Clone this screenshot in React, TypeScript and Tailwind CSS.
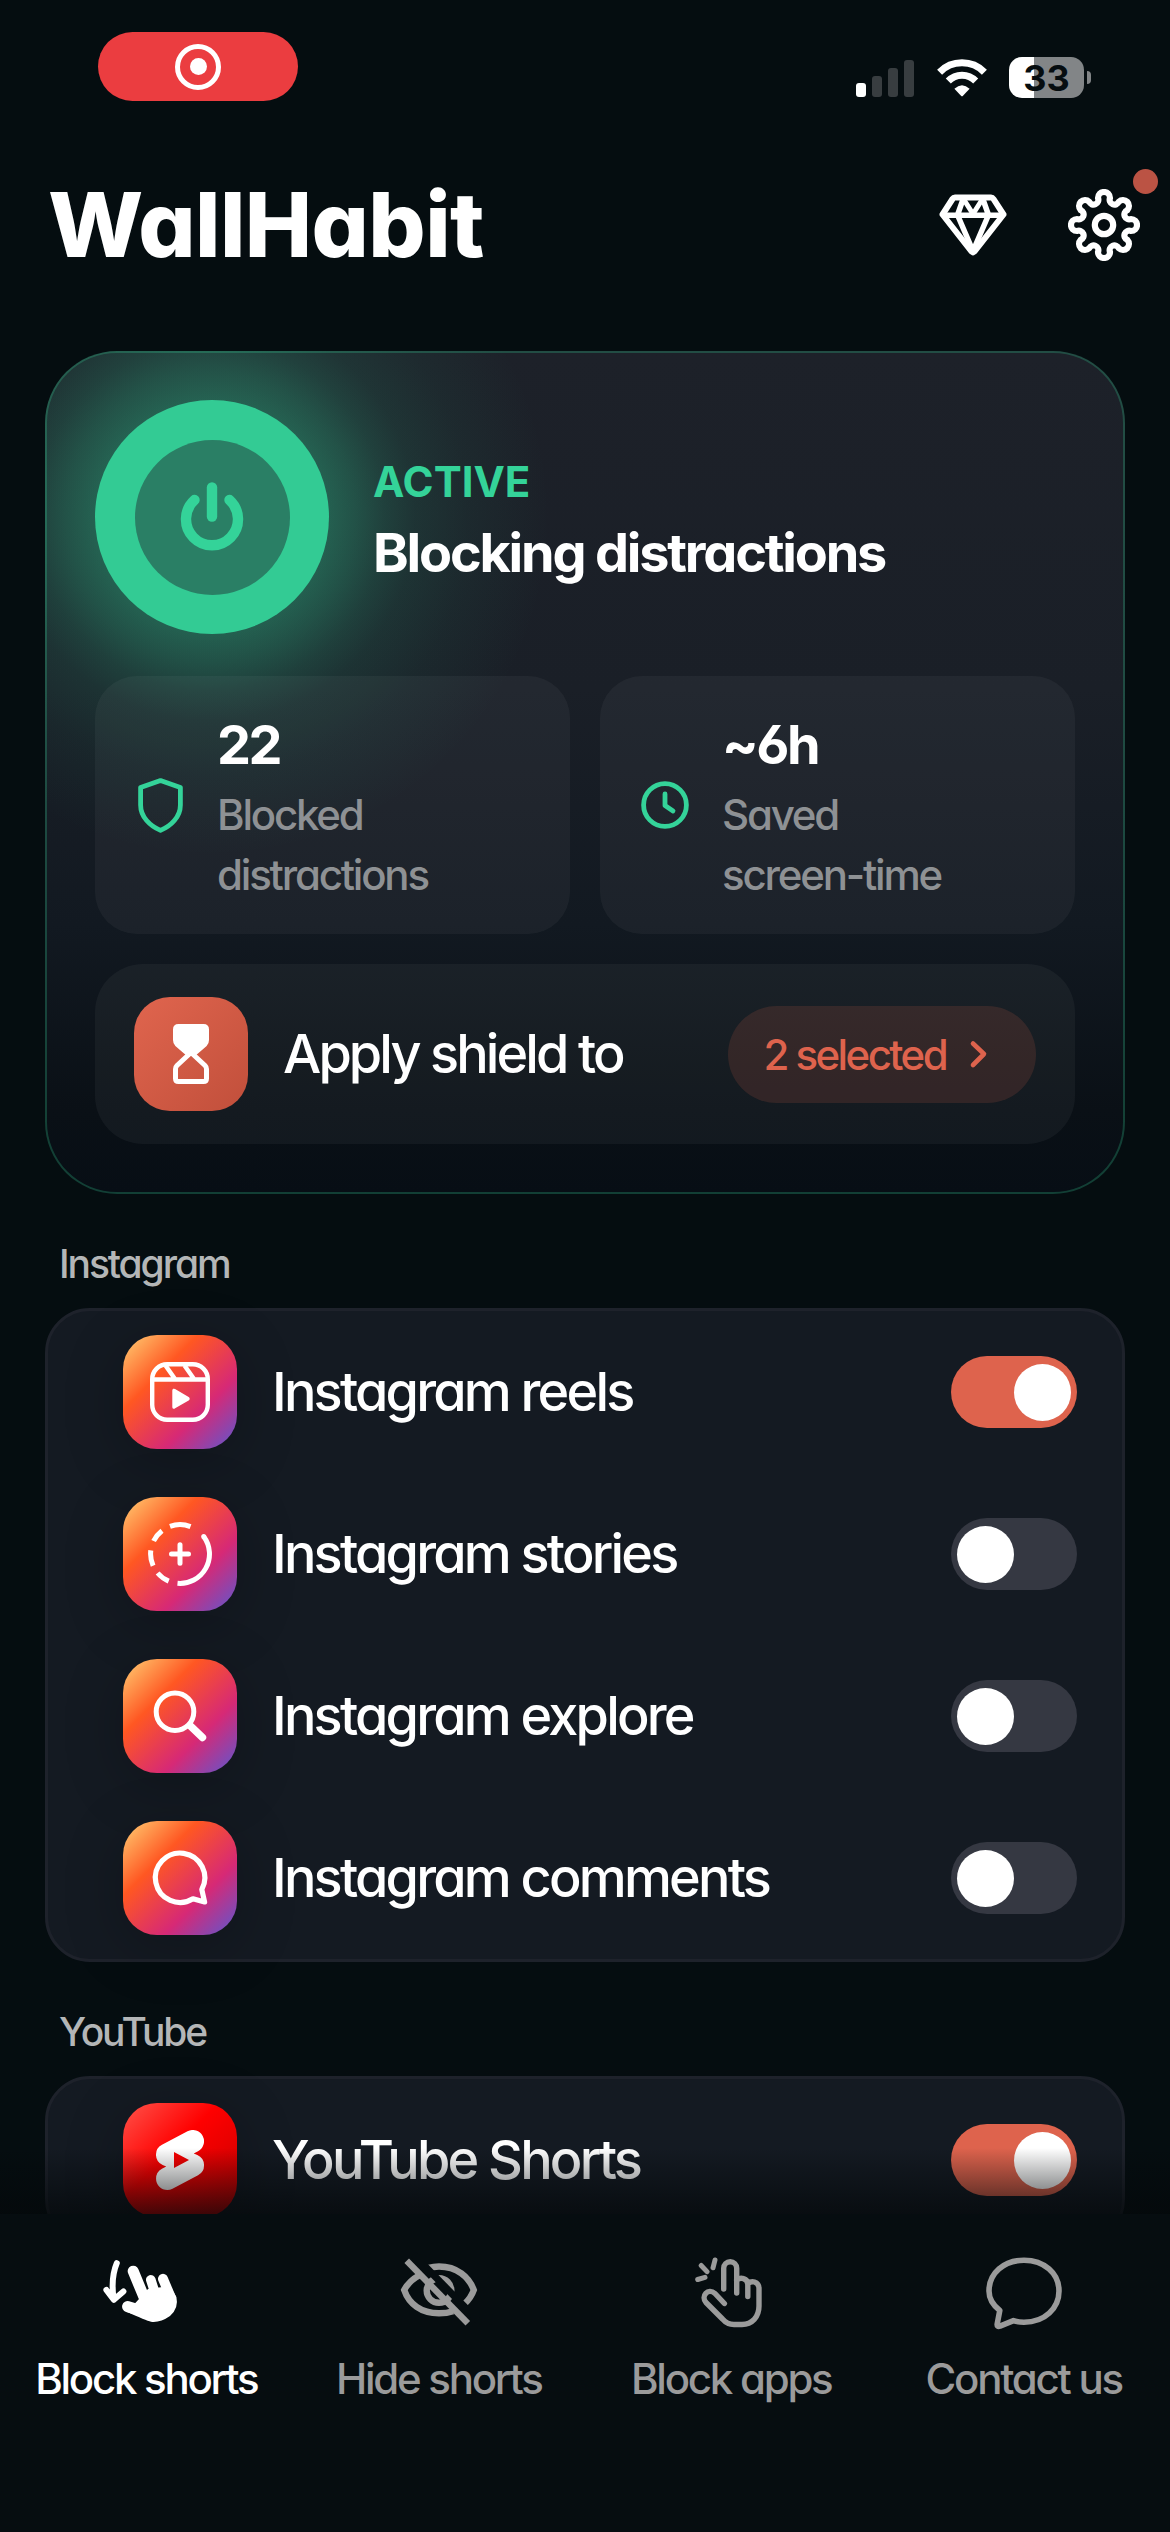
import React, { useState } from 'react';
import { SiYoutubeshorts } from 'react-icons/si';

function StatusBar() {
  return (
    <div className="flex h-[133px] shrink-0 items-center justify-between pl-[98px] pr-[79px]">
      <div className="flex h-[69px] w-[200px] items-center justify-center rounded-full bg-[#eb3d40]">
        <div className="flex h-[46px] w-[46px] items-center justify-center rounded-full border-[5px] border-white">
          <div className="h-[17px] w-[17px] rounded-full bg-white" />
        </div>
      </div>
      <div className="flex items-center pt-[22px]">
        <div className="flex h-[38px] items-end gap-[6px]">
          <div className="h-[14px] w-[10px] rounded-[3px] bg-white" />
          <div className="h-[21px] w-[10px] rounded-[3px] bg-[#383d40]" />
          <div className="h-[29px] w-[10px] rounded-[3px] bg-[#383d40]" />
          <div className="h-[37px] w-[10px] rounded-[3px] bg-[#383d40]" />
        </div>
        <svg className="ml-[23px] h-[38px] w-[50px]" viewBox="0 0 50 38" fill="none">
          <path d="M2.6 13.2A31.5 31.5 0 0 1 47.4 13.2" stroke="white" strokeWidth="7" />
          <path d="M11.3 22A19 19 0 0 1 38.7 22" stroke="white" strokeWidth="7" />
          <path d="M17.4 29.8Q25 22.6 32.6 29.8L26 36.8Q25 37.8 24 36.8Z" fill="white" />
        </svg>
        <div className="ml-[22px] flex h-[41px] w-[75px] items-center justify-center rounded-[13px] bg-[linear-gradient(90deg,#ffffff_33.3%,#828587_33.3%)] text-[36px] font-bold leading-none text-[#060d10]">
          33
        </div>
        <div className="ml-[3px] h-[13px] w-[4px] rounded-r-full bg-[#828587]" />
      </div>
    </div>
  );
}

function GemIcon() {
  return (
    <svg className="h-[62px] w-[68px]" viewBox="0 0 67 62" fill="none" stroke="white" strokeWidth="6" strokeLinejoin="round">
      <path d="M15.5 3.4H51.5Q53 3.4 54 5L64 20.5L35 57.5Q33.5 59 32 57.5L3 20.5L13 5Q14 3.4 15.5 3.4Z" />
      <path d="M4 21.3H63M24 4L18 21L33.5 57L49 21L43 4" strokeWidth="5.5" />
      <path d="M24 5L33.5 20L43 5" strokeWidth="5" />
    </svg>
  );
}

// eight round teeth joined by concave arcs
const gearPath =
  Array.from({ length: 8 }, (_, i) => {
    const a = (i * Math.PI) / 4;
    const at = (x: number, y: number) =>
      `${(36 + x * Math.cos(a) + y * Math.sin(a)).toFixed(2)} ${(36 + x * Math.sin(a) - y * Math.cos(a)).toFixed(2)}`;
    return `${i === 0 ? 'M' : 'A4.6 4.6 0 0 0 '}${at(-6, 27)}A6 6 0 0 1 ${at(6, 27)}`;
  }).join('') + 'A4.6 4.6 0 0 0 30 9Z';

function GearIcon() {
  return (
    <svg className="h-[72px] w-[72px]" viewBox="0 0 72 72" fill="none" stroke="white" strokeWidth="6.2" strokeLinejoin="round">
      <path d={gearPath} />
      <circle cx="36" cy="36" r="9.2" />
    </svg>
  );
}

function Header() {
  return (
    <header className="flex h-[184px] shrink-0 items-center justify-between pl-[48px] pr-[30px]">
      <h1 className="text-[90px] font-extrabold leading-none tracking-[-0.6px] text-white">WallHabit</h1>
      <div className="flex items-center gap-[61px]">
        <button aria-label="Premium">
          <GemIcon />
        </button>
        <button aria-label="Settings" className="relative">
          <GearIcon />
          <span className="absolute left-[65px] top-[-20px] h-[25px] w-[25px] rounded-full bg-[#bb5344]" />
        </button>
      </div>
    </header>
  );
}

function ShieldIcon() {
  return (
    <svg className="h-[55px] w-[45px]" viewBox="0 0 45 55" fill="none" stroke="#34d399" strokeWidth="4.8" strokeLinejoin="round">
      <path d="M22.5 2.6L42.4 9.6V27C42.4 39 33 48 22.5 52.4C12 48 2.6 39 2.6 27V9.6Z" />
    </svg>
  );
}

function ClockIcon() {
  return (
    <svg className="h-[48px] w-[48px]" viewBox="0 0 48 48" fill="none" stroke="#34d399" strokeWidth="4.8" strokeLinecap="round" strokeLinejoin="round">
      <circle cx="24" cy="24" r="21.4" />
      <path d="M24 13V24.5L32 30" />
    </svg>
  );
}

function StatCard({ icon, value, lines }: { icon: React.ReactNode; value: string; lines: string[] }) {
  return (
    <div className="flex h-[258px] flex-1 items-center gap-[30px] rounded-[42px] bg-white/[0.045] pl-[38px]">
      <div className="flex w-[54px] justify-center">{icon}</div>
      <div>
        <p className="text-[54px] font-bold leading-[80px] tracking-[-2.4px] text-white">{value}</p>
        {lines.map((line) => (
          <p key={line} className="text-[42px] font-medium leading-[60px] tracking-[-2.2px] text-[#8e9194]">
            {line}
          </p>
        ))}
      </div>
    </div>
  );
}

function ShieldCard() {
  return (
    <section className="mx-[45px] h-[843px] shrink-0 rounded-[72px] border-2 border-[#34d399]/25 bg-[radial-gradient(circle_at_165px_165px,rgba(52,211,153,0.38)_110px,rgba(52,211,153,0.28)_145px,rgba(52,211,153,0.18)_175px,rgba(52,211,153,0.11)_205px,rgba(52,211,153,0.05)_260px,transparent_340px),linear-gradient(180deg,#1d2129_0%,#1a1f27_40%,#121921_68%,#0a1016_90%,#070e15_100%)] bg-origin-border px-[48px] pt-[47px]">
      <div className="flex items-center gap-[44px]">
        <button
          aria-label="Toggle blocking"
          className="flex h-[234px] w-[234px] items-center justify-center rounded-full bg-[#33cb94]"
        >
          <span className="flex h-[155px] w-[155px] items-center justify-center rounded-full bg-[#2a7f65]">
            <svg className="h-[72px] w-[64px]" viewBox="0 0 64 72" fill="none" stroke="#34d399" strokeWidth="10.4" strokeLinecap="round">
              <path d="M32 6.5V35.5" />
              <path d="M14.5 19A26 26 0 1 0 49.5 19" />
            </svg>
          </span>
        </button>
        <div>
          <p className="text-[42px] font-bold leading-[71px] text-[#34d399]">ACTIVE</p>
          <h2 className="text-[54px] font-bold leading-[71px] tracking-[-2.2px] text-white">
            Blocking distractions
          </h2>
        </div>
      </div>

      <div className="mt-[42px] flex gap-[30px]">
        <StatCard icon={<ShieldIcon />} value="22" lines={['Blocked', 'distractions']} />
        <StatCard icon={<ClockIcon />} value="~6h" lines={['Saved', 'screen-time']} />
      </div>

      <div className="mt-[30px] flex h-[180px] items-center rounded-[48px] bg-white/[0.045] px-[39px]">
        <div className="flex h-[114px] w-[114px] items-center justify-center rounded-[36px] bg-[linear-gradient(135deg,#e0654e,#c14f3b)]">
          <svg className="h-[60px] w-[36px]" viewBox="0 0 36 60" fill="none" stroke="white" strokeWidth="5" strokeLinejoin="round">
            <path
              d="M5.5 2.5H30.5Q33.5 2.5 33.5 5.5V16Q33.5 18.5 32 20L21 29.5H15L4 20Q2.5 18.5 2.5 16V5.5Q2.5 2.5 5.5 2.5Z"
              fill="white"
            />
            <path d="M18 28.5L32 41.5Q33.5 43 33.5 45V54.5Q33.5 57.5 30.5 57.5H5.5Q2.5 57.5 2.5 54.5V45Q2.5 43 4 41.5Z" />
          </svg>
        </div>
        <p className="ml-[35px] flex-1 text-[54px] font-medium leading-none tracking-[-2.9px] text-white">Apply shield to</p>
        <button className="flex h-[97px] items-center rounded-full bg-[#de634d]/15 px-[36px] text-[42px] font-medium tracking-[-2.6px] text-[#de634d]">
          2 selected
          <svg className="ml-[12px] h-[42px] w-[42px]" viewBox="0 0 42 42" fill="none" stroke="#de634d" strokeWidth="4.6" strokeLinecap="round" strokeLinejoin="round">
            <path d="M15 10.5L26 21L15 32" />
          </svg>
        </button>
      </div>
    </section>
  );
}

function ReelsIcon() {
  return (
    <svg className="h-[60px] w-[60px]" viewBox="0 0 60 60" fill="none" stroke="white" strokeWidth="4.4">
      <rect x="2.2" y="2.2" width="55.6" height="55.6" rx="15" />
      <path d="M3 17.5H57M15.5 3.5L25 17M34.5 3.5L44 17" />
      <path d="M23.5 28.5V45Q23.5 46 24.5 45.3L38 37.4Q39 36.7 38 36L24.5 28Q23.5 27.5 23.5 28.5Z" fill="white" strokeWidth="2.4" />
    </svg>
  );
}

function StoriesIcon() {
  return (
    <svg className="h-[64px] w-[64px]" viewBox="-32 -32 64 64" fill="none" stroke="white" strokeWidth="5">
      <path d="M23.7 -17.5A29.4 29.4 0 0 1 -2.5 29.3M-10 -27.6A29.4 29.4 0 0 1 10.5 -27.4M-26.4 -13A29.4 29.4 0 0 1 -18 -23.3M-26.9 11.8A29.4 29.4 0 0 1 -29.2 -3.6M-11.3 27.1A29.4 29.4 0 0 1 -22.4 19" />
      <circle cx="23.7" cy="-17.5" r="2.5" fill="white" stroke="none" />
      <path d="M-8.5 0H8.5M0 -9.3V9.3" strokeLinecap="round" />
    </svg>
  );
}

function SearchIcon() {
  return (
    <svg className="h-[64px] w-[64px]" viewBox="-32 -32 64 64" fill="none" stroke="white" strokeLinecap="round">
      <circle cx="-5" cy="-4.2" r="18.8" strokeWidth="5" />
      <path d="M11 10.5L22.5 21.5" strokeWidth="7.4" />
    </svg>
  );
}

function CommentIcon() {
  return (
    <svg className="h-[64px] w-[64px]" viewBox="-32 -32 64 64" fill="none" stroke="white" strokeWidth="5.2" strokeLinejoin="round">
      <path d="M21.8 11.5L24.6 24L13 20.8A24.7 24.7 0 1 1 21.8 11.5Z" />
    </svg>
  );
}

function Toggle({ on, onChange }: { on: boolean; onChange: () => void }) {
  return (
    <button
      role="switch"
      aria-checked={on}
      onClick={onChange}
      className={`flex h-[72px] w-[126px] items-center rounded-full px-[6px] ${
        on ? 'justify-end bg-[#de634d]' : 'justify-start bg-[#353842]'
      }`}
    >
      <span className="h-[57px] w-[57px] rounded-full bg-white" />
    </button>
  );
}

type Item = { label: string; icon: React.ReactNode; tile: string; on: boolean };

const instaTile = 'bg-[linear-gradient(135deg,#ffbe68_5%,#ff5722_33%,#d62976_68%,#6355cb_98%)]';
const youtubeTile = 'bg-[linear-gradient(135deg,#ff4a42_5%,#ff0000_42%,#c40000_98%)]';

const instagramItems: Item[] = [
  { label: 'Instagram reels', icon: <ReelsIcon />, tile: instaTile, on: true },
  { label: 'Instagram stories', icon: <StoriesIcon />, tile: instaTile, on: false },
  { label: 'Instagram explore', icon: <SearchIcon />, tile: instaTile, on: false },
  { label: 'Instagram comments', icon: <CommentIcon />, tile: instaTile, on: false },
];

const youtubeItems: Item[] = [
  {
    label: 'YouTube Shorts',
    icon: <SiYoutubeshorts className="h-[60px] w-[60px] text-white" />,
    tile: youtubeTile,
    on: true,
  },
];

function Row({ item }: { item: Item }) {
  const [on, setOn] = useState(item.on);
  return (
    <div className="flex h-[162px] items-center pl-[75px] pr-[45px]">
      <div
        className={`flex h-[114px] w-[114px] items-center justify-center rounded-[34px] shadow-[0_12px_60px_rgba(0,0,0,0.22)] ${item.tile}`}
      >
        {item.icon}
      </div>
      <p className="ml-[35px] flex-1 text-[54px] font-medium leading-none tracking-[-2.8px] text-white">{item.label}</p>
      <Toggle on={on} onChange={() => setOn(!on)} />
    </div>
  );
}

function Section({ title, items }: { title: string; items: Item[] }) {
  return (
    <section className="mx-[45px] shrink-0">
      <h3 className="ml-[14px] pb-[14px] pt-[40px] text-[39px] font-medium leading-[60px] tracking-[-2.1px] text-[#b4b6b7]">
        {title}
      </h3>
      <div className="rounded-[45px] border-[3px] border-[#1e222b] bg-[#141a22]">
        {items.map((item) => (
          <Row key={item.label} item={item} />
        ))}
      </div>
    </section>
  );
}

function SwipeHandIcon() {
  return (
    <svg className="h-[72px] w-[72px] overflow-visible" viewBox="0 0 72 72" fill="none" stroke="currentColor" strokeLinecap="round" strokeLinejoin="round">
      <path d="M6.8 7.2Q0.6 22 3.6 43M-3.6 34L3.8 43.8L13.4 35.5" strokeWidth="6" />
      <path d="M23.2 15.2L36 46M17.6 50.6L36 56" strokeWidth="11" />
      <path d="M40.8 23.8L46 40" strokeWidth="9.6" />
      <path d="M53 22.8L61 42" strokeWidth="10" />
      <path d="M29 43L38 33L60 30L66.4 41Q69 52 60 60Q50 67 41 65.8Q36 64.5 17 56Z" fill="currentColor" stroke="none" />
    </svg>
  );
}

function EyeOffIcon() {
  return (
    <svg className="h-[72px] w-[80px] overflow-visible" viewBox="-40 -36 80 72" fill="none" stroke="currentColor" strokeWidth="6.4">
      <path d="M-11.5 -23.8Q-5 -25.5 0 -25.5C18 -25.5 30 -15 34.8 -2Q32 6 25.5 11.8" />
      <path d="M-20 -16.5Q-30 -11 -34.8 -2C-30 12 -18 21.3 0 21.3Q8 21.3 14 19.2" />
      <circle cx="0" cy="-1.5" r="12.3" />
      <path d="M-1 -14A12.5 12.5 0 0 1 12.3 1.5L0 -13Z" fill="currentColor" strokeWidth="3" />
      <path d="M-25.5 -37.5L38.5 28" stroke="#060d10" strokeWidth="7" />
      <path d="M-32.3 -31.2L28.8 31.3" />
    </svg>
  );
}

function TapIcon() {
  return (
    <svg className="h-[72px] w-[72px]" viewBox="0 0 72 72" fill="none" stroke="currentColor" strokeWidth="5.4" strokeLinecap="round" strokeLinejoin="round">
      <path d="M28.7 33V12.3A6.5 6.5 0 0 1 41.7 12.3V37" />
      <path d="M41.7 24Q45 21.3 48.5 22.6Q52.8 24 52.8 28.5V40.5M52.8 27.6Q56 25 59.5 26Q64 27.5 64 32.5V50C64 61 57 68.5 47 68.5H39C34 68.5 30.5 66.5 27.5 63L11 46.5C5.5 40 13 31.5 20 37.5L29.4 47.5" />
      <path d="M20 4L18 11.8M6.2 9.5L12 15.6M2.7 23.5L10 21.4" strokeWidth="5" />
    </svg>
  );
}

function BubbleIcon() {
  return (
    <svg className="h-[72px] w-[72px] overflow-visible" viewBox="0 0 72 72" fill="none" stroke="currentColor" strokeWidth="5.6" strokeLinejoin="round">
      <path d="M11.8 54.5L9.2 68Q8.8 71.2 12 70.2L25.5 64.6Q30 66.2 36 66.2C57 66.2 71 52 71 35C71 17 56 4.2 36 4.2C16 4.2 1 17 1 35Q1 46 11.8 54.5Z" />
    </svg>
  );
}

const tabs = [
  { label: 'Block shorts', icon: <SwipeHandIcon /> },
  { label: 'Hide shorts', icon: <EyeOffIcon /> },
  { label: 'Block apps', icon: <TapIcon /> },
  { label: 'Contact us', icon: <BubbleIcon /> },
];

function TabBar() {
  const [active, setActive] = useState('Block shorts');
  return (
    <nav className="grid h-[318px] shrink-0 grid-cols-4 items-start bg-[#060d10] pt-[42px]">
      {tabs.map((tab) => (
        <button
          key={tab.label}
          onClick={() => setActive(tab.label)}
          className={`flex flex-col items-center gap-[21px] ${tab.label === active ? 'text-white' : 'text-[#9b9b9b]'}`}
        >
          {tab.icon}
          <span className="whitespace-nowrap text-[42px] font-medium leading-[60px] tracking-[-2.25px]">{tab.label}</span>
        </button>
      ))}
    </nav>
  );
}

export default function App() {
  return (
    <div className="flex h-[2532px] w-[1170px] flex-col overflow-hidden bg-[#050d10] font-['Inter',sans-serif] [font-feature-settings:'cv11','cv03']">
      <StatusBar />
      <Header />
      <main className="relative flex min-h-0 flex-1 flex-col overflow-hidden pt-[34px]">
        <ShieldCard />
        <Section title="Instagram" items={instagramItems} />
        <Section title="YouTube" items={youtubeItems} />
        {/* Fade above the tab bar */}
        <div className="pointer-events-none absolute inset-x-0 bottom-0 h-[66px] bg-[linear-gradient(180deg,transparent,rgba(4,8,10,0.72))]" />
      </main>
      <TabBar />
    </div>
  );
}
